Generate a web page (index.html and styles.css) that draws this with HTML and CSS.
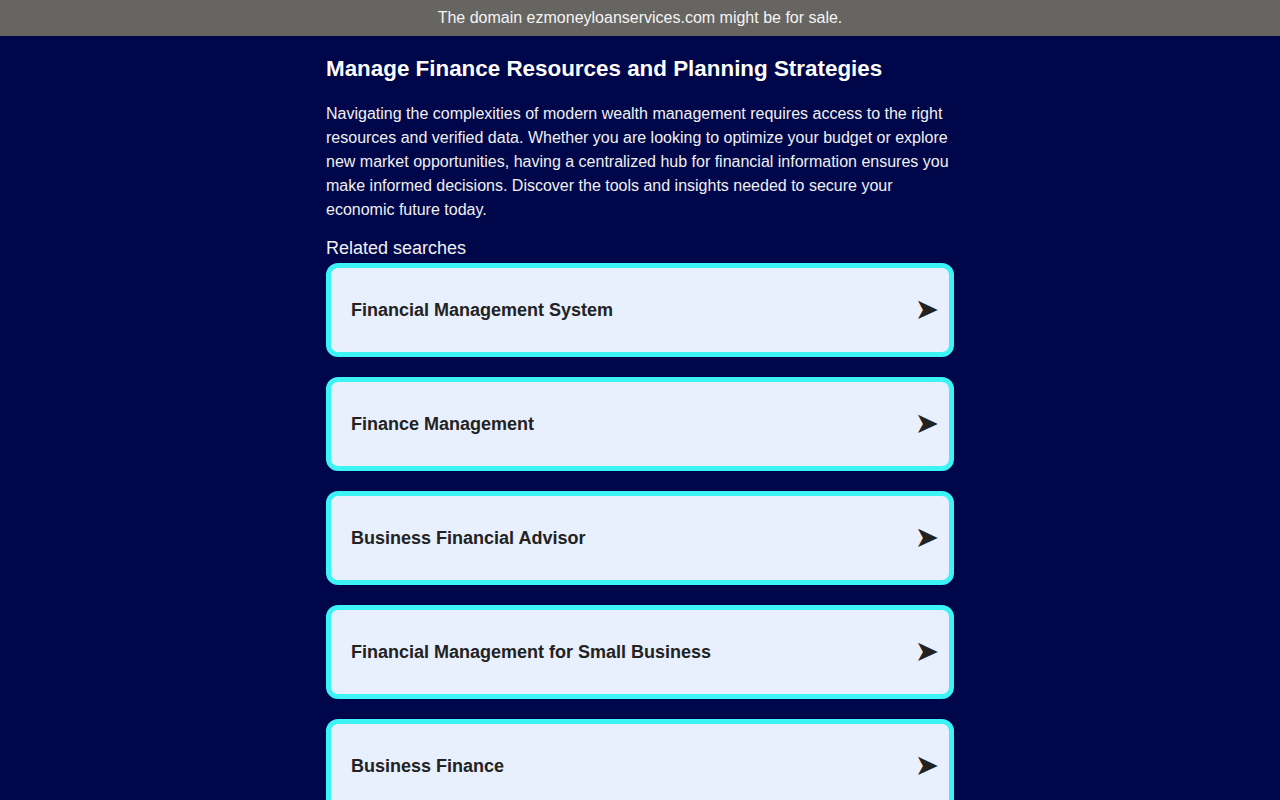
FILE: index.html
```html
<!DOCTYPE html>
<html lang="en">
<head>
<meta charset="utf-8">
<title>ezmoneyloanservices.com</title>
<link rel="stylesheet" href="styles.css">
</head>
<body>
<div class="topbar">The domain ezmoneyloanservices.com might be for sale.</div>
<main class="content">
  <h1 class="title">Manage Finance Resources and Planning Strategies</h1>
  <p class="intro">Navigating the complexities of modern wealth management requires access to the right resources and verified data. Whether you are looking to optimize your budget or explore new market opportunities, having a centralized hub for financial information ensures you make informed decisions. Discover the tools and insights needed to secure your economic future today.</p>
  <div class="related">Related searches</div>
  <ul class="links">
    <li class="card"><span class="label">Financial Management System</span><span class="arrow">➤</span></li>
    <li class="card"><span class="label">Finance Management</span><span class="arrow">➤</span></li>
    <li class="card"><span class="label">Business Financial Advisor</span><span class="arrow">➤</span></li>
    <li class="card"><span class="label">Financial Management for Small Business</span><span class="arrow">➤</span></li>
    <li class="card"><span class="label">Business Finance</span><span class="arrow">➤</span></li>
  </ul>
</main>
</body>
</html>
```
FILE: styles.css
```css
html, body {
  margin: 0;
  padding: 0;
}
body {
  background: #00064a;
  font-family: "Liberation Sans", Arial, sans-serif;
  color: #f2f2f2;
}
.topbar {
  height: 36px;
  line-height: 36px;
  background: #676561;
  color: #f4f4f4;
  text-align: center;
  font-size: 16px;
}
.content {
  width: 628px;
  margin: 0 auto;
  padding-top: 20px;
}
.title {
  margin: 0;
  font-size: 22.4px;
  line-height: 26px;
  font-weight: bold;
  color: #ffffff;
}
.intro {
  margin: 20px 0 0 0;
  font-size: 16px;
  line-height: 24px;
  color: #f0f0f0;
}
.related {
  margin-top: 16px;
  font-size: 18px;
  line-height: 21px;
  color: #f0f0f0;
}
.links {
  list-style: none;
  margin: 4px 0 0 0;
  padding: 0;
  display: flex;
  flex-direction: column;
  gap: 20px;
}
.card {
  display: flex;
  align-items: center;
  justify-content: space-between;
  height: 84px;
  border: 5px solid #3cf3f6;
  border-radius: 12px;
  background: #e8effd;
  padding: 0 10px 0 20px;
  color: #222222;
}
.label {
  font-size: 18px;
  font-weight: bold;
}
.arrow {
  font-family: "DejaVu Sans", sans-serif;
  font-size: 29px;
  line-height: 30px;
  margin-bottom: 2px;
  color: #222222;
}
```
